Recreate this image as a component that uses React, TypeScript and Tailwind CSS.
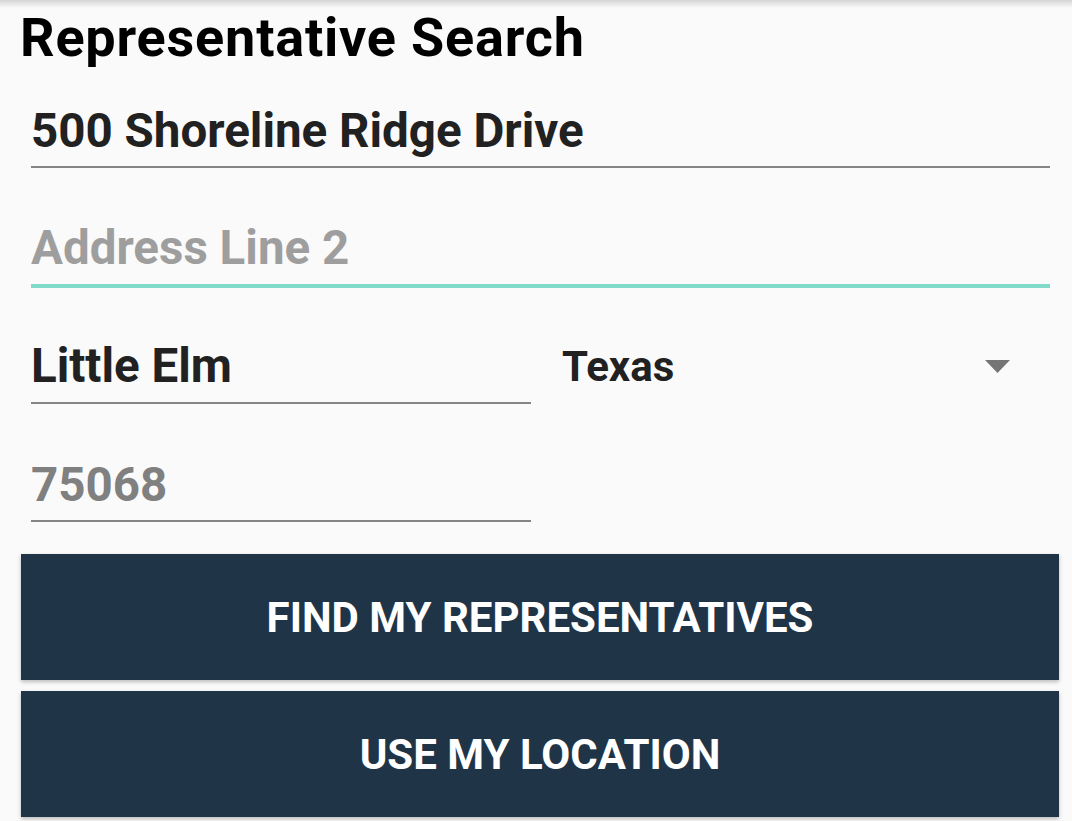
import React from 'react'

export default function App() {
  return (
    <main className="relative w-[1072px] h-[821px] overflow-hidden bg-[#fafafa] font-['Roboto',sans-serif]">
      {/* app bar shadow */}
      <div className="absolute inset-x-0 top-0 h-[8px] bg-gradient-to-b from-black/15 to-transparent" />

      <div className="flex flex-col">
        <h1 className="mt-[8px] ml-[20px] text-[54px] leading-[60px] tracking-[0.8px] font-bold text-black">
          Representative Search
        </h1>

        {/* Address line 1 */}
        <div className="mt-[33px] ml-[31px] mr-[22px] pb-[5px] border-b-2 border-[#858585]">
          <input
            readOnly
            value="500 Shoreline Ridge Drive"
            className="w-full bg-transparent outline-none text-[47.5px] leading-[60px] h-[60px] font-bold text-[#212121]"
          />
        </div>

        {/* Address line 2 (focused) */}
        <div className="mt-[50px] ml-[31px] mr-[22px] pb-[6px] border-b-4 border-[#80dac9]">
          <input
            readOnly
            placeholder="Address Line 2"
            className="w-full bg-transparent outline-none text-[47.5px] leading-[60px] h-[60px] font-bold text-[#212121] placeholder:text-[#9e9e9e]"
          />
        </div>

        {/* City + State */}
        <div className="mt-[48px] flex">
          <div className="ml-[31px] w-[500px] pb-[6px] border-b-2 border-[#858585]">
            <input
              readOnly
              value="Little Elm"
              className="w-full bg-transparent outline-none text-[47.5px] leading-[60px] h-[60px] font-bold text-[#212121]"
            />
          </div>
          <div className="flex-1 flex items-start pl-[31px] pr-[62px]">
            <span className="flex-1 text-[42px] leading-[60px] h-[60px] pt-[1px] font-bold text-[#212121]">Texas</span>
            <svg className="mt-[24px]" width="25" height="13" viewBox="0 0 25 13">
              <path d="M0 0 L25 0 L12.5 13 Z" fill="#757575" />
            </svg>
          </div>
        </div>

        {/* Zip */}
        <div className="mt-[51px] ml-[31px] w-[500px] pb-[5px] border-b-2 border-[#858585]">
          <input
            readOnly
            value="75068"
            className="w-full bg-transparent outline-none text-[47.5px] leading-[60px] h-[60px] font-bold text-[#808080]"
          />
        </div>

        <button className="mt-[32px] ml-[21px] w-[1038px] h-[126px] bg-[#1f3547] text-white text-[42px] font-bold shadow-[0_2px_4px_rgba(0,0,0,0.25)]">
          FIND MY REPRESENTATIVES
        </button>
        <button className="mt-[11px] ml-[21px] w-[1038px] h-[126px] bg-[#1f3547] text-white text-[42px] font-bold shadow-[0_2px_4px_rgba(0,0,0,0.25)]">
          USE MY LOCATION
        </button>
      </div>
    </main>
  )
}
